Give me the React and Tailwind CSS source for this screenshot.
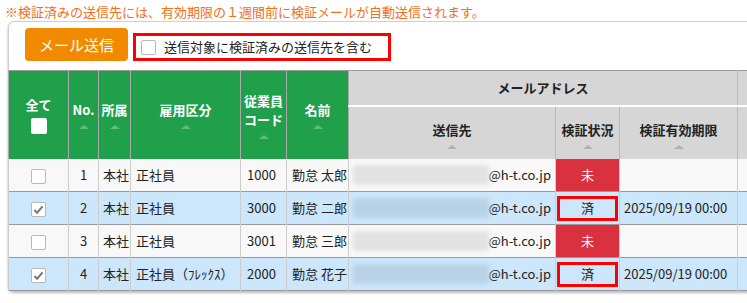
import React from 'react'

const font = { fontFamily: '"Noto Sans CJK JP", "Noto Sans", sans-serif' }

function SortMark({ light }) {
  return (
    <span
      className={`mt-[6px] block w-0 h-0 border-l-[5px] border-r-[5px] border-b-[4px] border-l-transparent border-r-transparent ${
        light ? 'border-b-[#63bb80]' : 'border-b-[#b0b0b0]'
      }`}
    />
  )
}

function Check({ checked }) {
  return (
    <span className="inline-flex items-center justify-center w-[15px] h-[15px] bg-white border border-[#b8b8b8] rounded-[2px] align-middle">
      {checked && (
        <svg width="11" height="11" viewBox="0 0 12 12">
          <path d="M1.5 6.5 L4.5 9.5 L10.5 2.5" fill="none" stroke="#7a7a7a" strokeWidth="2.2" />
        </svg>
      )}
    </span>
  )
}

const rows = [
  { no: 1, dept: '本社', type: '正社員', code: '1000', name: '勤怠 太郎', verified: false },
  { no: 2, dept: '本社', type: '正社員', code: '3000', name: '勤怠 二郎', verified: true },
  { no: 3, dept: '本社', type: '正社員', code: '3001', name: '勤怠 三郎', verified: false },
  { no: 4, dept: '本社', type: '正社員（ﾌﾚｯｸｽ）', code: '2000', name: '勤怠 花子', verified: true },
]

export default function App() {
  const gth = 'bg-[#20a04b] text-white font-bold border-x border-[#a9a9a9] align-middle p-0'
  const hth = 'bg-[#d6d6d6] text-[#222] font-bold align-middle p-0 border-x border-[#b9b9b9]'

  return (
    <div className="w-[747px] h-[303px] overflow-hidden bg-white text-[13px] text-[#222]" style={font}>
      {/* notice */}
      <p className="pl-[5px] pt-[3px] h-[21px] leading-[18px] text-[#f66e1a] whitespace-nowrap">
        ※検証済みの送信先には、有効期限の１週間前に検証メールが自動送信されます。
      </p>

      {/* panel */}
      <div className="ml-[8px] w-[820px] border-t border-l border-[#cfcfcf] rounded-tl-[6px] rounded-bl-[6px] shadow-[0_2px_3px_rgba(0,0,0,0.28)] bg-white">
        <div className="flex items-start h-[48px] pl-[16px] pt-[6px] gap-[5px]">
          <button className="w-[103px] h-[33px] bg-[#f28a00] text-white text-[15px] rounded-[4px] leading-[33px]">
            メール送信
          </button>
          <div className="mt-[5px] w-[258px] h-[28px] border-[3px] border-[#ff0000] flex items-center pl-[5px] gap-[8px] whitespace-nowrap">
            <Check />
            <span className="leading-[20px]">送信対象に検証済みの送信先を含む</span>
          </div>
        </div>

        <table className="table-fixed border-collapse w-[800px] -ml-px">
          <colgroup>
            <col className="w-[60px]" />
            <col className="w-[30px]" />
            <col className="w-[32px]" />
            <col className="w-[110px]" />
            <col className="w-[46px]" />
            <col className="w-[62px]" />
            <col className="w-[207px]" />
            <col className="w-[64px]" />
            <col className="w-[118px]" />
            <col className="w-[71px]" />
          </colgroup>
          <thead>
            <tr className="h-[35px] border-t border-[#999]">
              <th rowSpan={2} className={gth}>
                <div className="flex flex-col items-center">
                  <span className="leading-[18px]">全て</span>
                  <span className="mt-[4px] w-[16px] h-[16px] bg-white rounded-[2px]" />
                </div>
              </th>
              <th rowSpan={2} className={gth}>
                <div className="flex flex-col items-center"><span className="leading-[18px]">No.</span><SortMark light /></div>
              </th>
              <th rowSpan={2} className={gth}>
                <div className="flex flex-col items-center"><span className="leading-[18px]">所属</span><SortMark light /></div>
              </th>
              <th rowSpan={2} className={gth}>
                <div className="flex flex-col items-center"><span className="leading-[18px]">雇用区分</span><SortMark light /></div>
              </th>
              <th rowSpan={2} className={gth}>
                <div className="flex flex-col items-center">
                  <span className="leading-[19px]">従業員</span>
                  <span className="leading-[19px]">コード</span>
                  <SortMark light />
                </div>
              </th>
              <th rowSpan={2} className={gth}>
                <div className="flex flex-col items-center"><span className="leading-[18px]">名前</span><SortMark light /></div>
              </th>
              <th colSpan={3} className={`${hth} border-b-2 border-b-white`}>メールアドレス</th>
              <th className={`${hth} border-b-2 border-b-white`}></th>
            </tr>
            <tr className="h-[53px]">
              {['送信先', '検証状況', '検証有効期限', '送信日時'].map((t) => (
                <th key={t} className={`${hth} pt-[4px]`}>
                  <div className="flex flex-col items-center whitespace-nowrap">
                    <span className="leading-[18px]">{t}</span>
                    <SortMark />
                  </div>
                </th>
              ))}
            </tr>
          </thead>
          <tbody>
            {rows.map((r) => {
              const bg = r.verified ? 'bg-[#cce6fb]' : 'bg-[#f8f8f8]'
              const td = 'border-x border-[#cdcdcd] p-0 align-middle whitespace-nowrap'
              return (
                <tr key={r.no} className={`h-[33px] border-b border-[#999] ${bg}`}>
                  <td className={`${td} text-center`}><Check checked={r.verified} /></td>
                  <td className={`${td} text-center`}>{r.no}</td>
                  <td className={`${td} pl-[4px]`}>{r.dept}</td>
                  <td className={`${td} pl-[5px]`}>{r.type}</td>
                  <td className={`${td} pl-[6px]`}>{r.code}</td>
                  <td className={`${td} pl-[5px]`}>{r.name}</td>
                  <td className={`${td} pl-[4px] pr-[4px]`}>
                    <div className="flex items-center">
                      <div className={`w-[136px] h-[20px] blur-[2px] rounded-[2px] ${r.verified ? 'bg-[#b9d2e6]' : 'bg-[#e2e2e2]'}`} />
                      <span className="ml-auto">@h-t.co.jp</span>
                    </div>
                  </td>
                  <td className={`${td} p-0`}>
                    {r.verified ? (
                      <div className="mx-[1px] h-[25px] border-[3px] border-[#ff0000] flex items-center justify-center">済</div>
                    ) : (
                      <div className="h-[32px] bg-[#d9313f] text-white flex items-center justify-center">未</div>
                    )}
                  </td>
                  <td className={`${td} pl-[4px]`}>{r.verified ? '2025/09/19 00:00' : ''}</td>
                  <td className={td}></td>
                </tr>
              )
            })}
          </tbody>
        </table>
      </div>
    </div>
  )
}
